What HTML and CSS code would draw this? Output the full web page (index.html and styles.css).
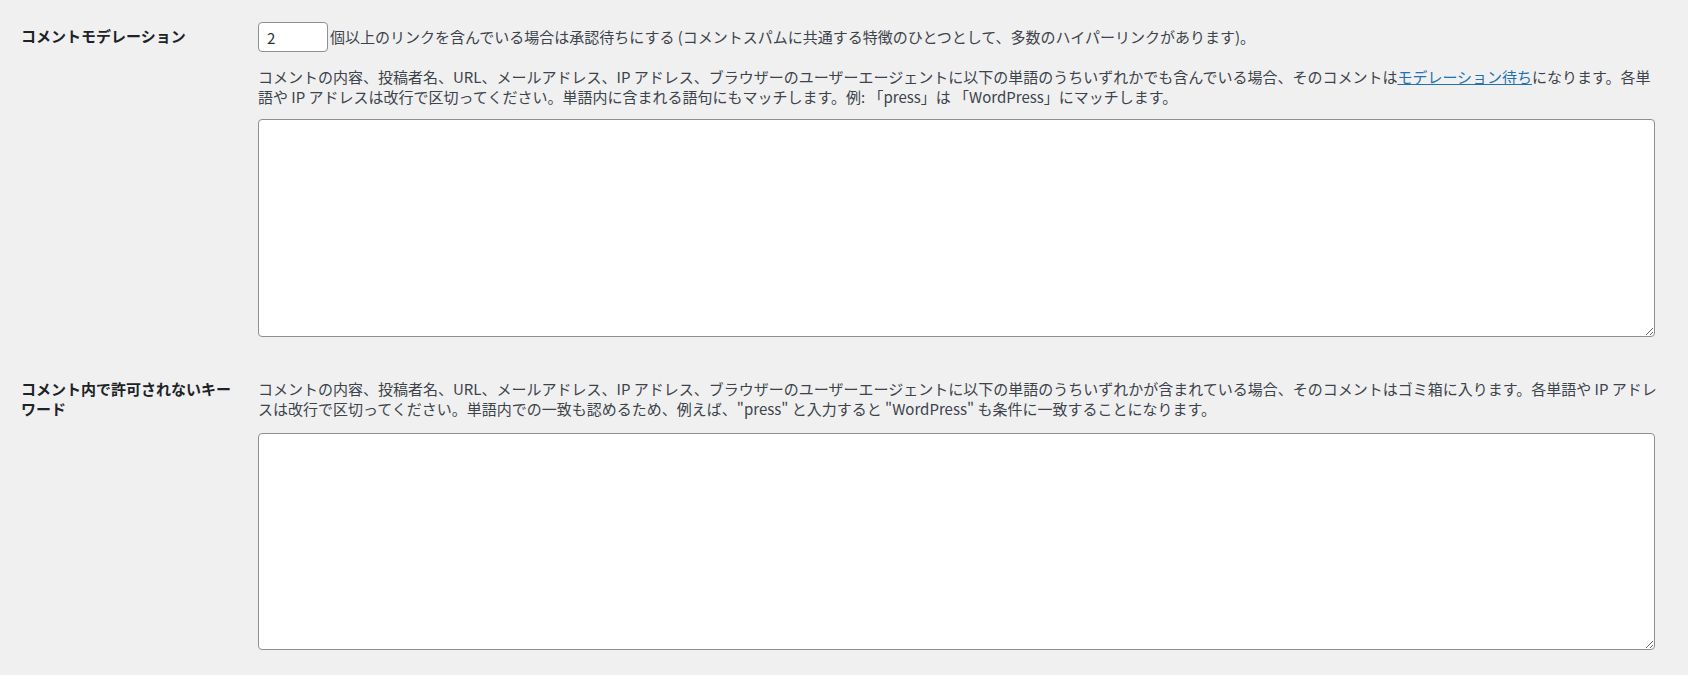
FILE: index.html
```html
<!DOCTYPE html>
<html lang="ja">
<head>
    <meta charset="UTF-8">
    <meta name="viewport" content="width=device-width, initial-scale=1.0">
    <title>ディスカッション設定</title>
    <link rel="stylesheet" href="styles.css">
</head>
<body>

<div class="wrap">
    <!-- コメントモデレーション -->
    <div class="form-row first-row">
        <div class="row-label">コメントモデレーション</div>
        <div class="row-field">
            <p class="links-line"><input class="small-text" type="text" value="2">個以上のリンクを含んでいる場合は承認待ちにする (コメントスパムに共通する特徴のひとつとして、多数のハイパーリンクがあります)。</p>
            <p class="description">コメントの内容、投稿者名、URL、メールアドレス、IP アドレス、ブラウザーのユーザーエージェントに以下の単語のうちいずれかでも含んでいる場合、そのコメントは<a href="#">モデレーション待ち</a>になります。各単<br>語や IP アドレスは改行で区切ってください。単語内に含まれる語句にもマッチします。例: 「press」は 「WordPress」にマッチします。</p>
            <textarea class="large-text"></textarea>
        </div>
    </div>

    <!-- 許可されないキーワード -->
    <div class="form-row second-row">
        <div class="row-label">コメント内で許可されないキーワード</div>
        <div class="row-field">
            <p class="description">コメントの内容、投稿者名、URL、メールアドレス、IP アドレス、ブラウザーのユーザーエージェントに以下の単語のうちいずれかが含まれている場合、そのコメントはゴミ箱に入ります。各単語や IP アドレ<br>スは改行で区切ってください。単語内での一致も認めるため、例えば、"press" と入力すると "WordPress" も条件に一致することになります。</p>
            <textarea class="large-text"></textarea>
        </div>
    </div>
</div>

</body>
</html>
```

FILE: styles.css
```css
/* 全体 */
body {
    margin: 0;
    padding: 0;
    background-color: #f0f0f1;
    color: #3c434a;
    font-family: "Noto Sans CJK JP", "Noto Sans", sans-serif;
    font-size: 15px;
    line-height: 20px;
}

.wrap {
    padding-left: 21px;
}

/* 行 */
.form-row {
    display: grid;
    grid-template-columns: 237px 1397px;
}

.first-row {
    padding-top: 22px;
}

.second-row {
    padding-top: 42px;
}

.row-label {
    width: 220px;
    color: #1d2327;
    font-weight: 700;
}

.first-row .row-label {
    padding-top: 4px;
}

p {
    margin: 0;
}

/* リンク数 */
.links-line {
    display: flex;
    align-items: center;
    height: 30px;
    white-space: nowrap;
}

.small-text {
    box-sizing: border-box;
    width: 70px;
    height: 30px;
    margin: 0 2px 0 0;
    padding: 0 8px;
    border: 1px solid #8c8f94;
    border-radius: 4px;
    background-color: #fff;
    color: #2c3338;
    font-family: inherit;
    font-size: 15px;
}

/* 説明文 */
.description {
    white-space: nowrap;
}

.first-row .description {
    margin-top: 15px;
}

.description a {
    color: #2271b1;
    text-decoration: underline;
}

/* テキストエリア */
.large-text {
    display: block;
    box-sizing: border-box;
    width: 1397px;
    height: 218px;
    margin: 12px 0 0 0;
    border: 1px solid #8c8f94;
    border-radius: 4px;
    background-color: #fff;
    font-family: inherit;
}

.second-row .large-text {
    height: 217px;
    margin-top: 14px;
}
```
